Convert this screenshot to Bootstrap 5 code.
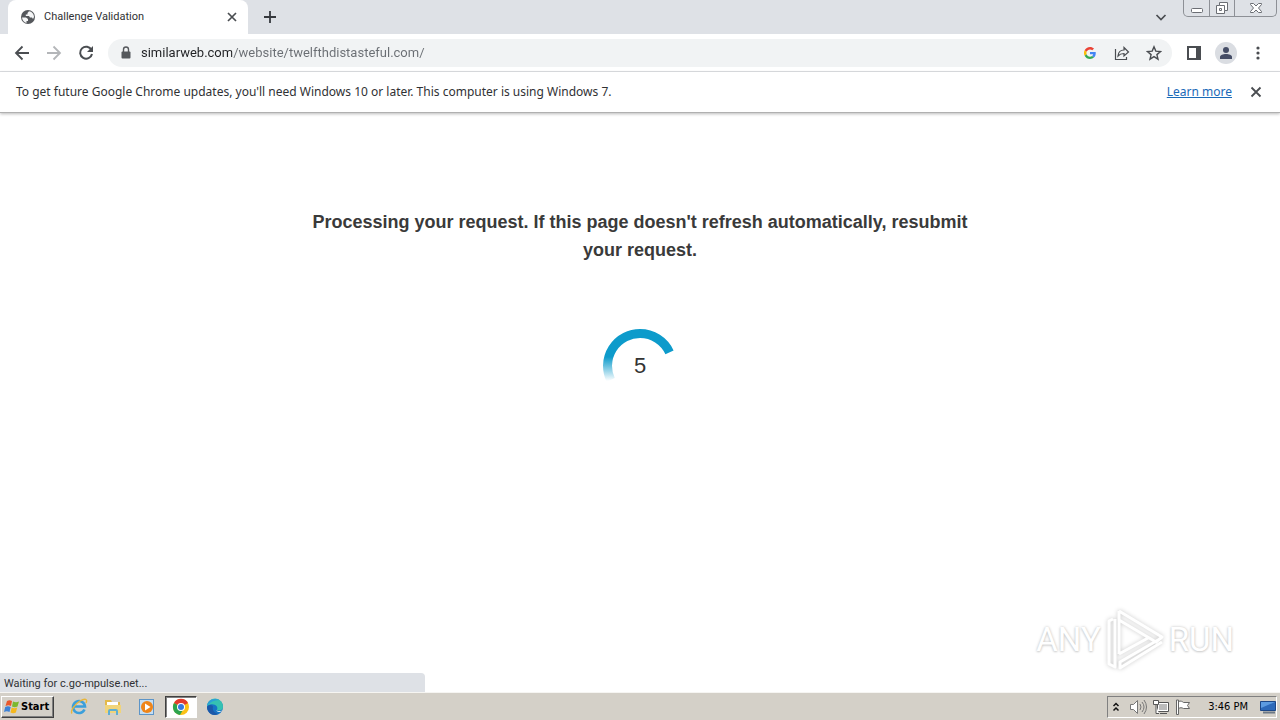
<!DOCTYPE html>
<html lang="en">
<head>
<meta charset="utf-8">
<meta name="viewport" content="width=device-width, initial-scale=1">
<title>Challenge Validation</title>
<link href="https://cdn.jsdelivr.net/npm/bootstrap@5.3.0/dist/css/bootstrap.min.css" rel="stylesheet">
<style>
  body { font-family: "Noto Sans", "DejaVu Sans", sans-serif; font-size: 12px; line-height: 16px; color: #303134; background: #fff; }
  svg { display: block; flex-shrink: 0; }
  button, input { font: inherit; color: inherit; }
  .plain-btn { background: none; border: 0; padding: 0; color: #4a4d51; display: flex; align-items: center; justify-content: center; flex-shrink: 0; }
  .sq { width: 32px; height: 32px; }

  .tab-strip { background: #dee1e6; height: 34px; padding-left: 8px; }
  .page-tab { width: 240px; height: 34px; background: #fff; border-radius: 8px 8px 0 0; padding: 0 10px 0 12px; font-family: Roboto, sans-serif; font-size: 11px; line-height: 18px; }
  .tab-gap { width: 44px; height: 34px; }
  .chevron { width: 24px; height: 34px; margin-right: 10px; }
  .win-controls { height: 17px; border: 1px solid #8d9096; border-top: 0; border-radius: 0 0 5px 5px; overflow: hidden; margin-right: 3px; }
  .win-controls button { width: 25px; color: #6b6e74; }
  .win-controls button + button { border-left: 1px solid #8d9096; }
  .win-controls button:last-child { width: 42px; }

  .tool-bar { height: 38px; border-bottom: 1px solid #dadce0; padding: 0 6px; }
  .omnibox { height: 28px; border-radius: 14px; background: #f1f3f4; padding: 0 2px 0 11px; margin: 0 6px; }
  .address { border: 0; outline: 0; padding: 0; font-family: Roboto, sans-serif; font-size: 13px; line-height: 20px; color: #5f6368;
    background: linear-gradient(to right, #202124 91px, #6a6e73 91px); -webkit-background-clip: text; background-clip: text; -webkit-text-fill-color: transparent; }
  .avatar { width: 22px; height: 22px; border-radius: 50%; background: #dadde2; }

  .info-bar { height: 41px; padding: 0 8px 0 16px; border-bottom: 1px solid #b0b0b0; box-shadow: 0 1px 3px #bbb; font-size: 12px; }
  .info-bar a { color: #1a6ab8; margin-right: 8px; }

  .notice { max-width: 680px; margin-top: 95px; font-family: "Liberation Sans", Arial, sans-serif; font-size: 18px; line-height: 28px; font-weight: 700; color: #3a3a3a; }
  .loader { width: 74px; height: 74px; margin-top: 65px; font-family: "Liberation Sans", Arial, sans-serif; font-size: 22px; line-height: 24px; color: #333; }
  .loader svg, .loader span { grid-area: 1 / 1; }
  .status-line { position: absolute; left: 0; bottom: 0; width: 425px; max-width: 100%; height: 19px; padding: 3px 4px 0; background: #dee1e6; border-radius: 0 4px 0 0; font-family: Roboto, sans-serif; font-size: 11px; }
  .brand-mark { position: absolute; right: 46px; bottom: 20px; gap: 4px; font-family: Roboto, "Liberation Sans", sans-serif; font-size: 33px; line-height: 62px; color: #fff; text-shadow: 0 0 3px #c4c4c4, 0 1px 2px #d8d8d8; }
  .brand-mark svg { filter: drop-shadow(0 0 2px #c8c8c8); }

  .task-bar { height: 28px; background: #d4d0c8; border-top: 1px solid #f6f5f2; padding: 2px 3px 2px 1px; font-family: "DejaVu Sans Condensed", "DejaVu Sans", sans-serif; font-size: 11px; color: #000; }
  .raised { width: 53px; height: 22px; background: #d4d0c8; border: 1px solid; border-color: #fff #404040 #404040 #fff; box-shadow: inset -1px -1px #808080; padding: 0 2px; gap: 1px; color: #000; font-weight: 700; }
  .task { width: 34px; height: 22px; }
  .task.open { width: 32px; background: #fff; border: 1px solid; border-color: #404040 #fff #fff #404040; box-shadow: inset 1px 1px #808080; margin: 0 1px; }
  .tray { height: 22px; border: 1px solid; border-color: #808080 #fff #fff #808080; padding: 0 0 0 4px; }
</style>
</head>
<body class="d-flex flex-column min-vh-100">
<header>
  <div class="tab-strip d-flex">
    <div class="page-tab d-flex align-items-center">
      <svg width="16" height="16" viewBox="0 0 16 16"><circle cx="8" cy="8" r="7" fill="#55585c"/><path d="M2 8.500h4l2 1.500v2H6.500v2C4 13.500 2.200 11 2 8.500zM9 2.200 7.500 4v1.500H5.800V7H9l1 1.500h2l1 1.500 1-2C14 5 12 2.500 9 2.200z" fill="#f5f6f7"/></svg>
      <span class="ms-2 flex-grow-1">Challenge Validation</span>
      <button class="plain-btn" aria-label="Close tab"><svg width="12" height="12" viewBox="0 0 12 12"><path d="m2 2 8 8m0-8-8 8" stroke="currentColor" stroke-width="1.700"/></svg></button>
    </div>
    <button class="plain-btn tab-gap" aria-label="New tab"><svg width="14" height="14" viewBox="0 0 14 14"><path d="M7 1v12M1 7h12" stroke="#36393e" stroke-width="1.800"/></svg></button>
    <button class="plain-btn chevron ms-auto" aria-label="Search tabs"><svg width="12" height="12" viewBox="0 0 12 12"><path d="m1.500 4 4.500 4.500L10.500 4" fill="none" stroke="currentColor" stroke-width="1.700"/></svg></button>
    <div class="win-controls d-flex">
      <button class="plain-btn" aria-label="Minimize"><svg width="14" height="16" viewBox="0 0 14 16"><rect x="1.500" y="8.500" width="11" height="4" rx="1" fill="#fff" stroke="currentColor"/></svg></button>
      <button class="plain-btn" aria-label="Restore"><svg width="14" height="16" viewBox="0 0 14 16"><path d="M4.500 2.500h8v8h-3v3h-8v-8h3z" fill="#fff" stroke="currentColor"/><path d="M4.500 5.500h5v5M4.500 8.500h2v2h-2z" fill="none" stroke="currentColor"/></svg></button>
      <button class="plain-btn" aria-label="Close"><svg width="14" height="16" viewBox="0 0 14 16"><path d="M1.500 3.500h3L7 6l2.500-2.500h3v1L9.500 8l3 3.500v1h-3L7 10l-2.500 2.500h-3v-1l3-3.500-3-3.500z" fill="#fff" stroke="currentColor"/></svg></button>
    </div>
  </div>
  <nav class="tool-bar d-flex align-items-center" aria-label="Browser">
    <button class="plain-btn sq" aria-label="Back"><svg width="16" height="16" viewBox="0 0 16 16"><path d="M15 8H2m6.500-6.500L2 8l6.500 6.500" fill="none" stroke="currentColor" stroke-width="1.800"/></svg></button>
    <button class="plain-btn sq" aria-label="Forward"><svg width="16" height="16" viewBox="0 0 16 16"><path d="M1 8h13M7.500 1.500 14 8l-6.500 6.500" fill="none" stroke="#b4b6b9" stroke-width="1.800"/></svg></button>
    <button class="plain-btn sq" aria-label="Reload"><svg width="16" height="16" viewBox="0 0 16 16"><path d="M13.500 5A6 6 0 1 0 14 9" fill="none" stroke="currentColor" stroke-width="2"/><path d="M15 1v6H9z" fill="currentColor"/></svg></button>
    <div class="omnibox d-flex align-items-center flex-grow-1">
      <svg class="me-2" width="14" height="14" viewBox="0 0 14 14"><rect x="2.500" y="5.500" width="9" height="7" rx="1" fill="#55585c"/><path d="M4.500 6V3.500a2.500 2.500 0 0 1 5 0V6" fill="none" stroke="#55585c" stroke-width="1.400"/></svg>
      <input class="address flex-grow-1" type="text" aria-label="Address" value="similarweb.com/website/twelfthdistasteful.com/" spellcheck="false">
      <button class="plain-btn sq" aria-label="Search with Google"><svg width="12" height="12" viewBox="0 0 48 48"><path fill="#ea4335" d="M24 9.500c3.500 0 6.700 1.200 9.200 3.600l6.900-6.900C35.900 2.400 30.500 0 24 0 14.600 0 6.500 5.400 2.600 13.200l8 6.200C12.400 13.700 17.700 9.500 24 9.500z"/><path fill="#4285f4" d="M47 24.500c0-1.600-.2-3.100-.4-4.500H24v9h12.900c-.6 3-2.200 5.500-4.700 7.200l7.700 6C44.400 38 47 31.800 47 24.500z"/><path fill="#fbbc05" d="M10.500 28.600a14 14 0 0 1 0-9.200l-8-6.200a24 24 0 0 0 0 21.600z"/><path fill="#34a853" d="M24 48c6.500 0 11.900-2.100 15.900-5.800l-7.700-6c-2.200 1.500-4.900 2.300-8.200 2.300-6.300 0-11.600-4.200-13.500-9.900l-8 6.200C6.500 42.600 14.600 48 24 48z"/></svg></button>
      <button class="plain-btn sq" aria-label="Share"><svg width="16" height="16" viewBox="0 0 16 16"><path d="M1.500 4v10.500h11V12M10 2.500 14.500 7 10 11V8.500c-3 0-4.500.8-6 2.500.3-3.500 2.500-6 6-6z" fill="none" stroke="currentColor" stroke-width="1.200"/></svg></button>
      <button class="plain-btn sq" aria-label="Bookmark"><svg width="16" height="16" viewBox="0 0 16 16"><path d="m8 1.800 1.800 4.300 4.700.4-3.600 3.100L12 14.200 8 11.700l-4 2.500 1.100-4.600-3.600-3.100 4.700-.4z" fill="none" stroke="currentColor" stroke-width="1.400"/></svg></button>
    </div>
    <button class="plain-btn sq" aria-label="Side panel"><svg width="14" height="14" viewBox="0 0 14 14"><path d="M0 0h14v14H0zM2 2v10h7V2z" fill="currentColor" fill-rule="evenodd"/></svg></button>
    <button class="plain-btn sq" aria-label="Profile"><span class="avatar d-flex align-items-center justify-content-center"><svg width="12" height="12" viewBox="0 0 12 12" fill="#454d66"><circle cx="6" cy="3" r="3"/><path d="M0 12v-2c0-2 3-3 6-3s6 1 6 3v2z"/></svg></span></button>
    <button class="plain-btn sq" aria-label="Menu"><svg width="4" height="14" viewBox="0 0 4 14" fill="currentColor"><circle cx="2" cy="2" r="1.600"/><circle cx="2" cy="7" r="1.600"/><circle cx="2" cy="12" r="1.600"/></svg></button>
  </nav>
  <div class="info-bar d-flex align-items-center">
    <span class="flex-grow-1">To get future Google Chrome updates, you'll need Windows 10 or later. This computer is using Windows 7.</span>
    <a href="#">Learn more</a>
    <button class="plain-btn sq" aria-label="Dismiss"><svg width="12" height="12" viewBox="0 0 12 12"><path d="m1.500 1.500 9 9m0-9-9 9" stroke="currentColor" stroke-width="1.800"/></svg></button>
  </div>
</header>

<main class="flex-grow-1 position-relative d-flex flex-column align-items-center">
  <h1 class="notice text-center mb-0">Processing your request. If this page doesn't refresh automatically, resubmit your request.</h1>
  <div class="loader d-grid align-items-center text-center" role="status">
    <svg width="74" height="74" viewBox="0 0 74 74"><defs><linearGradient id="fade" gradientUnits="userSpaceOnUse" x1="0" y1="28" x2="0" y2="52"><stop stop-color="#0d9bcb"/><stop offset="1" stop-color="#0d9bcb" stop-opacity="0"/></linearGradient></defs><path d="M7.700 51A32.500 32.500 0 0 1 37 4.500a32.500 32.500 0 0 1 29.500 18.800" fill="none" stroke="url(#fade)" stroke-width="9"/></svg>
    <span>5</span>
  </div>
  <div class="status-line">Waiting for c.go-mpulse.net...</div>
  <div class="brand-mark d-flex align-items-center" aria-label="ANY RUN">
    <span>ANY</span>
    <svg width="60" height="64" viewBox="0 0 60 64" fill="none" stroke="#fff" stroke-width="3" stroke-linejoin="round"><path d="M14 3v43M14 3l43 26-6 5L14 12M8 11 4 13v43l6 3V11M14 46l29-16M57 34 15 60v-6l38-22" /></svg>
    <span>RUN</span>
  </div>
</main>

<footer class="task-bar d-flex align-items-center">
  <button class="raised d-flex align-items-center"><svg width="16" height="16" viewBox="0 0 16 16"><path d="M3 2c2-1 3-1 5 0L7 7C5 6 4 6 1.500 7z" fill="#e9582b"/><path d="M9 2.500c2 1 4 1 6 0L13.500 7.500c-2 1-3.500 1-5.500 0z" fill="#7cb82f"/><path d="M1.200 8c2-1 3.600-1 5.500 0l-1.200 5c-2-1-3.500-1-5.500 0z" fill="#3d82d6"/><path d="M7.700 8.500c2 1 3.500 1 5.500 0l-1.300 5c-2 1-3.400 1-5.400 0z" fill="#f5b81e"/></svg><span>Start</span></button>
  <div class="d-flex ms-2 align-items-center">
    <button class="plain-btn task" aria-label="Internet Explorer"><svg width="18" height="18" viewBox="0 0 18 18"><path d="M14.500 11.500A6 6 0 1 1 15 8.500H4" fill="none" stroke="#3b9fdb" stroke-width="2.600"/><path d="M2 15.500C0 13 5 6 10 3s8-2 6 2" fill="none" stroke="#e9b63a" stroke-width="1.400"/></svg></button>
    <button class="plain-btn task" aria-label="File Explorer"><svg width="18" height="18" viewBox="0 0 18 18"><path d="M1 2h6l1 2h8v10H1z" fill="#e3b94a"/><path d="M3 4h11v4H3z" fill="#fff"/><path d="M1 7h16v8H1z" fill="#f1d47a"/><path d="M4 17v-4q0-2 2-2h6q2 0 2 2v4h-2v-4H6v4z" fill="#5faed2"/></svg></button>
    <button class="plain-btn task" aria-label="Media Player"><svg width="18" height="18" viewBox="0 0 18 18"><rect x="1.500" y="1.500" width="14" height="15" fill="#c6def2" stroke="#5d95c8"/><circle cx="9" cy="9" r="6" fill="#ef8519"/><path d="m7 5.500 5.500 3.500L7 12.500z" fill="#fff"/></svg></button>
    <button class="plain-btn task open" aria-label="Chrome"><svg width="18" height="18" viewBox="0 0 18 18"><circle cx="9" cy="9" r="8" fill="#fbc116"/><path d="M9 9 2 5a8 8 0 0 1 14 0z" fill="#e33b2e"/><path d="m9 9-7-4a8 8 0 0 0 6 12l4-7z" fill="#2da44e"/><circle cx="9" cy="9" r="4" fill="#fff"/><circle cx="9" cy="9" r="3" fill="#3679e0"/></svg></button>
    <button class="plain-btn task" aria-label="Edge"><svg width="18" height="18" viewBox="0 0 18 18"><circle cx="9" cy="9" r="8" fill="#1673c5"/><path d="M1 8a8 8 0 0 1 16 1c0 3-3 4-6 3 2-4-4-8-10-4z" fill="#35c1b2"/><path d="M1 8a8 8 0 0 1 12-6C8 2 4 4 1 8z" fill="#2a9fd8"/><path d="M1 9c2-3 6-2 6 0-1 3 1 6 5 7-6 3-11-2-11-7z" fill="#1b58a9"/><path d="M10 12c1 1 4 1.500 6 .5-1 2-5 2-6-.5z" fill="#e6f5f8"/></svg></button>
  </div>
  <div class="tray d-flex align-items-center ms-auto">
    <button class="plain-btn me-2" aria-label="Show hidden icons"><svg width="8" height="12" viewBox="0 0 8 12"><path d="m1.500 5 2.500-2.500L6.500 5m-5 4.500L4 7l2.500 2.500" fill="none" stroke="#111" stroke-width="1.500"/></svg></button>
    <button class="plain-btn" aria-label="Volume"><svg width="20" height="18" viewBox="0 0 20 18" fill="none" stroke="#777"><path d="M2.500 6.500h3l4-4v13l-4-4h-3z" fill="#fff"/><path d="M12 6q2 3 0 6M14 4q4 5 0 10M16 2q5 7 0 14"/></svg></button>
    <button class="plain-btn ms-1" aria-label="Network"><svg width="18" height="18" viewBox="0 0 18 18" fill="#fff" stroke="#555"><path d="M5.500 4.500h11v9h-11zM8 15.500h7"/><path d="M7 6h8v6H7z" fill="#bbb" stroke="none"/><path d="M1.500 2.500h5v4h-5zM4 7v8.500h3" /></svg></button>
    <button class="plain-btn ms-1" aria-label="Action Center"><svg width="18" height="18" viewBox="0 0 18 18" fill="#fff" stroke="#666"><path d="M2.500 2v14.500h2V2zM4.500 3.500c2-1 4 0 5 1h6l-2 3 2 3h-6c-2-1-3-1-5 0z"/></svg></button>
    <span class="ms-3 me-2">3:46 PM</span>
    <button class="plain-btn ms-1" aria-label="Show desktop"><svg width="16" height="18" viewBox="0 0 16 18"><path d="M.5 3.500h15v9H.5z" fill="#2c69b9" stroke="#1c4787"/><path d="M1 4h14L1 10z" fill="#5c9be0"/><path d="M3 14.500h12" stroke="#6d7986" stroke-width="2"/></svg></button>
  </div>
</footer>
<script src="https://cdn.jsdelivr.net/npm/bootstrap@5.3.0/dist/js/bootstrap.bundle.min.js"></script>
</body>
</html>
